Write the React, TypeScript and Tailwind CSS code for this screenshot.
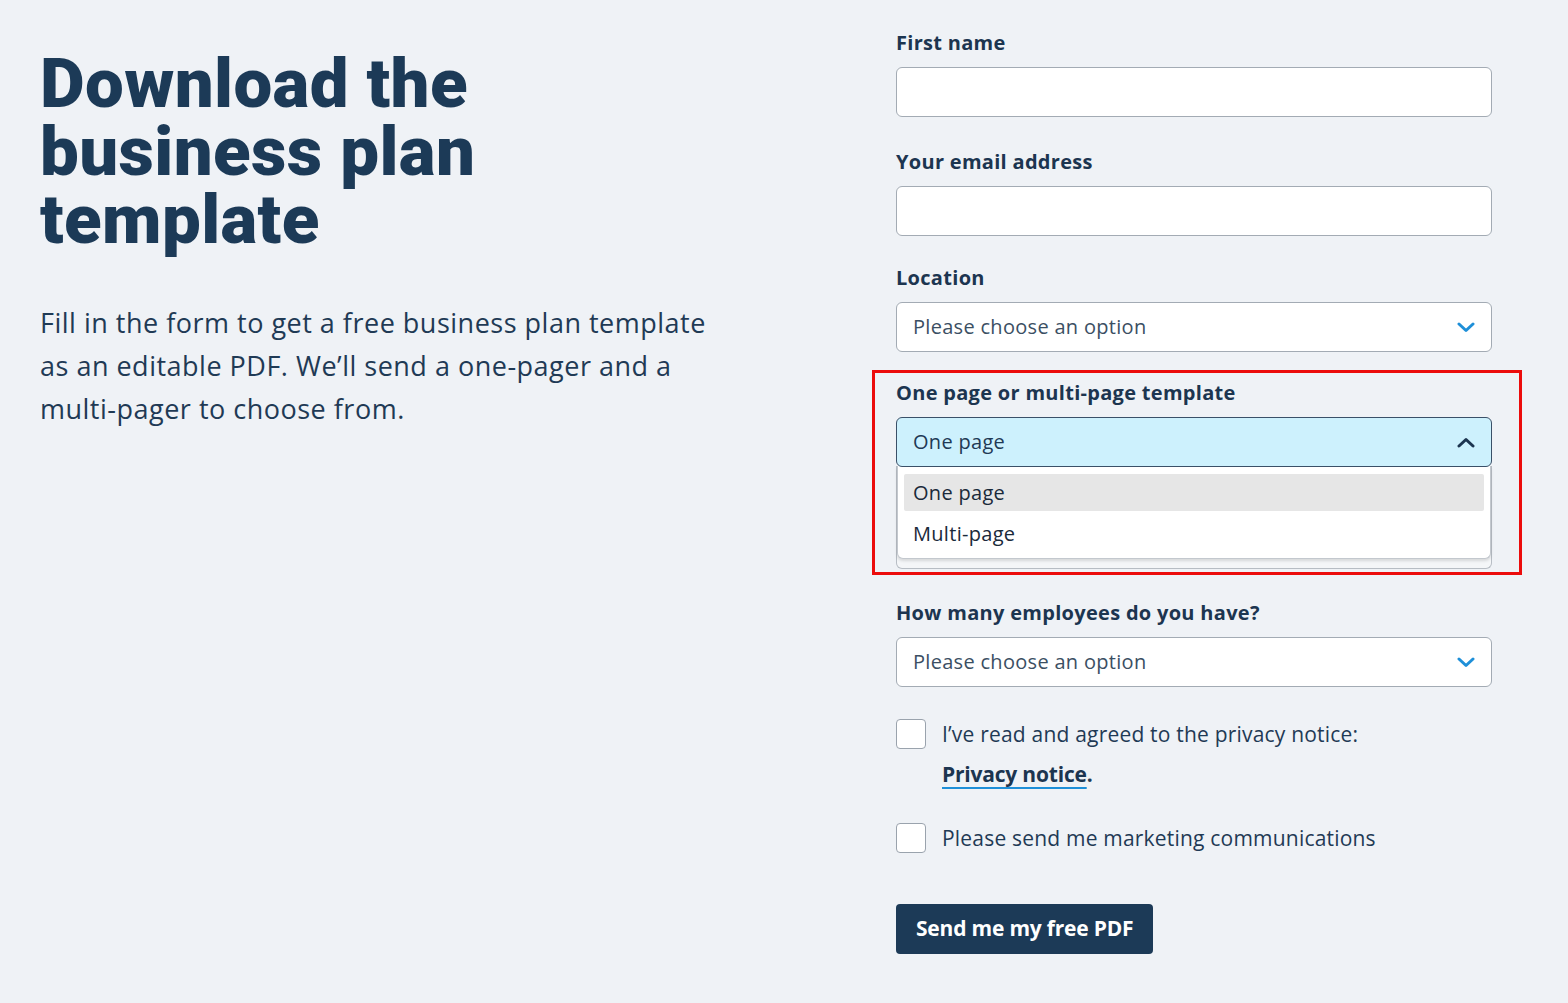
import React from "react";

const Chevron = ({ up = false, color }: { up?: boolean; color: string }) => (
  <svg width="18" height="11" viewBox="0 0 18 11" fill="none">
    <path
      d={up ? "M2 9 L9 2.5 L16 9" : "M2 2 L9 8.5 L16 2"}
      stroke={color}
      strokeWidth="3"
      strokeLinecap="round"
      strokeLinejoin="round"
    />
  </svg>
);

const Label = ({ children }: { children: React.ReactNode }) => (
  <div className="text-[20px] leading-[24px] font-bold text-[#1c3550] tracking-[0.3px] mb-3">
    {children}
  </div>
);

export default function App() {
  return (
    <div
      className="relative w-[1568px] h-[1003px] bg-[#eff2f6] overflow-hidden text-[#1f3a55]"
      style={{ fontFamily: "'Open Sans', 'Noto Sans', sans-serif" }}
    >
      <div className="flex pl-[40px]">
        <div className="w-[856px] pt-[50px]">
          <h1
            className="text-[69px] leading-[68px] font-black text-[#1c3a57] tracking-[0.4px]"
            style={{ fontFamily: "Roboto, sans-serif" }}
          >
            Download the
            <br />
            business plan
            <br />
            template
          </h1>
          <p className="mt-[47px] text-[27px] leading-[43px] text-[#1f3a55] tracking-[0.5px]">
            Fill in the form to get a free business plan template
            <br />
            as an editable PDF. We’ll send a one-pager and a
            <br />
            multi-pager to choose from.
          </p>
        </div>

        <div className="w-[596px] pt-[31px] flex flex-col">
          <div>
            <Label>First name</Label>
            <div className="h-[50px] rounded-[6px] border border-[#a3abb4] bg-white" />
          </div>

          <div className="mt-[33px]">
            <Label>Your email address</Label>
            <div className="h-[50px] rounded-[6px] border border-[#a3abb4] bg-white" />
          </div>

          <div className="mt-[30px]">
            <Label>Location</Label>
            <div className="h-[50px] rounded-[6px] border border-[#a3abb4] bg-white flex items-center justify-between px-4">
              <span className="text-[20px] text-[#3b4f63] tracking-[0.3px]">Please choose an option</span>
              <Chevron color="#1e8fd8" />
            </div>
          </div>

          <div className="mt-[29px]">
            <Label>One page or multi-page template</Label>
            <div className="h-[50px] rounded-[6px] border border-[#3a5068] bg-[#cdf1fd] flex items-center justify-between px-4 relative z-10">
              <span className="text-[20px] text-[#1f3a55] tracking-[0.3px]">One page</span>
              <Chevron up color="#1c3550" />
            </div>
            <div className="relative h-[103px] -mt-[1px] rounded-b-[6px] border border-t-0 border-[#b7bdc4] bg-[#f4f6f8]">
              <div className="absolute left-0 right-0 top-0 h-[93px] bg-white rounded-b-[6px] border border-t-0 border-[#c3c8ce] shadow-[0_2px_3px_rgba(0,0,0,0.12)] px-[6px] pt-[8px]">
                <div className="h-[37px] rounded-[2px] bg-[#e6e6e6] flex items-center px-[9px] text-[20px] text-[#1a2a3a] tracking-[0.3px]">
                  One page
                </div>
                <div className="h-[46px] flex items-center px-[9px] text-[20px] text-[#1a2a3a] tracking-[0.3px]">
                  Multi-page
                </div>
              </div>
            </div>
          </div>

          <div className="mt-[32px]">
            <Label>How many employees do you have?</Label>
            <div className="h-[50px] rounded-[6px] border border-[#a3abb4] bg-white flex items-center justify-between px-4">
              <span className="text-[20px] text-[#3b4f63] tracking-[0.3px]">Please choose an option</span>
              <Chevron color="#1e8fd8" />
            </div>
          </div>

          <div className="mt-[32px] flex items-start gap-4">
            <div className="w-[30px] h-[30px] shrink-0 rounded-[4px] border border-[#9aa3ad] bg-white" />
            <div className="text-[21px] leading-[30px] text-[#1f3a55] tracking-[0.2px]">
              I’ve read and agreed to the privacy notice:
              <div className="mt-[10px]">
                <span className="font-bold text-[#1c3550] tracking-[-0.2px] underline decoration-[#1e8fd8] decoration-2 underline-offset-[5px]">
                  Privacy notice
                </span>
                <span className="font-bold">.</span>
              </div>
            </div>
          </div>

          <div className="mt-[34px] flex items-center gap-4">
            <div className="w-[30px] h-[30px] shrink-0 rounded-[4px] border border-[#9aa3ad] bg-white" />
            <div className="text-[21px] leading-[30px] text-[#1f3a55] tracking-[0.2px]">
              Please send me marketing communications
            </div>
          </div>

          <div className="mt-[51px]">
            <button className="h-[50px] px-5 rounded-[4px] bg-[#1c3a57] text-white text-[21px] font-bold tracking-[-0.2px]">
              Send me my free PDF
            </button>
          </div>
        </div>
      </div>

      <div className="absolute left-[872px] top-[370px] w-[650px] h-[205px] border-[3px] border-[#ec0c0c] pointer-events-none" />
    </div>
  );
}
